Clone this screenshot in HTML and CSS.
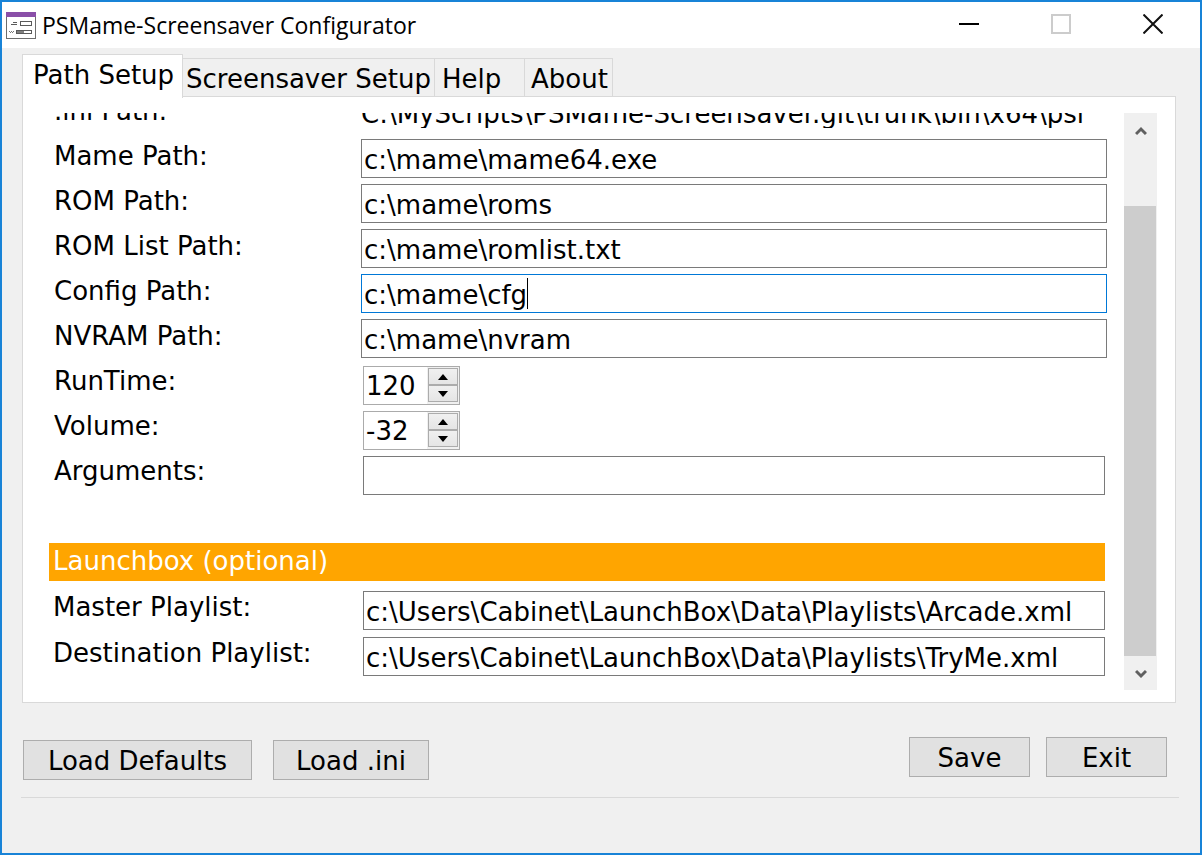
FILE: index.html
```html
<!DOCTYPE html>
<html lang="en">
<head>
<meta charset="utf-8">
<meta name="viewport" content="width=device-width, initial-scale=1">
<title>PSMame-Screensaver Configurator</title>
<link rel="stylesheet" href="styles.css">
</head>
<body>
<div class="window">
  <header class="titlebar">
    <svg class="app-icon" width="30" height="27" viewBox="0 0 30 27" shape-rendering="crispEdges" aria-hidden="true">
      <rect x="0.5" y="0.5" width="29" height="26" fill="#fff" stroke="#6d6d6d"/>
      <rect width="30" height="5" fill="#8a4fa8"/>
      <path d="M7 10.5h4M5 12.5h6" stroke="#5a5a5a"/>
      <rect x="14.5" y="9.5" width="11" height="4" fill="#fff" stroke="#5a5a5a"/>
      <path d="M3 19.5h1M4 20.5h1M5 19.5h1M6 20.5h1M7 19.5h1" fill="none" stroke="#777"/>
      <rect x="10.5" y="18.5" width="15" height="3" fill="#fff" stroke="#5a5a5a"/>
      <rect x="11" y="19" width="7" height="2" fill="#808080"/>
    </svg>
    <h1 class="title">PSMame-Screensaver Configurator</h1>
    <div class="window-controls">
      <button class="window-button" type="button" aria-label="Minimize">
        <svg width="20" height="20" viewBox="0 0 20 20" shape-rendering="crispEdges"><path d="M0 10h20" stroke="#000" stroke-width="2"/></svg>
      </button>
      <button class="window-button" type="button" aria-label="Maximize" disabled>
        <svg width="20" height="20" viewBox="0 0 20 20" shape-rendering="crispEdges"><rect x="1" y="1" width="18" height="18" fill="none" stroke="#ccc" stroke-width="2"/></svg>
      </button>
      <button class="window-button" type="button" aria-label="Close">
        <svg width="20" height="20" viewBox="0 0 20 20"><path d="M0.5 0.5l19 19M19.5 0.5l-19 19" stroke="#111" stroke-width="2"/></svg>
      </button>
    </div>
  </header>

  <main class="client">
    <div class="tabs" role="tablist">
      <button class="tab tab-active" type="button" role="tab" aria-selected="true">Path Setup</button>
      <button class="tab tab-saver" type="button" role="tab" aria-selected="false">Screensaver Setup</button>
      <button class="tab tab-help" type="button" role="tab" aria-selected="false">Help</button>
      <button class="tab tab-about" type="button" role="tab" aria-selected="false">About</button>
    </div>

    <section class="panel" role="tabpanel">
      <form class="form">
        <div class="row row-clipped"><span class="label">.ini Path:</span><span class="ini-path">C:\MyScripts\PSMame-Screensaver.git\trunk\bin\x64\psi</span></div>
        <div class="group">
          <div class="row"><label class="label" for="mame">Mame Path:</label><input class="field" id="mame" type="text" value="c:\mame\mame64.exe"></div>
          <div class="row"><label class="label" for="rom">ROM Path:</label><input class="field" id="rom" type="text" value="c:\mame\roms"></div>
          <div class="row"><label class="label" for="romlist">ROM List Path:</label><input class="field" id="romlist" type="text" value="c:\mame\romlist.txt"></div>
          <div class="row"><label class="label" for="config">Config Path:</label><div class="active-field"><input class="field field-active" id="config" type="text" value="c:\mame\cfg"><span class="caret"></span></div></div>
          <div class="row"><label class="label" for="nvram">NVRAM Path:</label><input class="field" id="nvram" type="text" value="c:\mame\nvram"></div>
        </div>
        <div class="group group-inset">
          <div class="row"><label class="label" for="runtime">RunTime:</label>
            <div class="spinner"><input class="spinner-input" id="runtime" type="number" value="120">
              <div class="spinner-buttons">
                <button class="step" type="button" aria-label="Increase run time"><svg width="10" height="6" viewBox="0 0 10 6"><path d="M5 0l5 6H0z"/></svg></button>
                <button class="step" type="button" aria-label="Decrease run time"><svg width="10" height="6" viewBox="0 0 10 6"><path d="M0 0h10L5 6z"/></svg></button>
              </div></div></div>
          <div class="row"><label class="label" for="volume">Volume:</label>
            <div class="spinner"><input class="spinner-input" id="volume" type="number" value="-32">
              <div class="spinner-buttons">
                <button class="step" type="button" aria-label="Increase volume"><svg width="10" height="6" viewBox="0 0 10 6"><path d="M5 0l5 6H0z"/></svg></button>
                <button class="step" type="button" aria-label="Decrease volume"><svg width="10" height="6" viewBox="0 0 10 6"><path d="M0 0h10L5 6z"/></svg></button>
              </div></div></div>
          <div class="row"><label class="label" for="arguments">Arguments:</label><input class="field" id="arguments" type="text" value=""></div>
        </div>
        <h2 class="section-title">Launchbox (optional)</h2>
        <div class="group group-inset group-launchbox">
          <div class="row"><label class="label" for="master">Master Playlist:</label><input class="field" id="master" type="text" value="c:\Users\Cabinet\LaunchBox\Data\Playlists\Arcade.xml"></div>
          <div class="row"><label class="label" for="destination">Destination Playlist:</label><input class="field" id="destination" type="text" value="c:\Users\Cabinet\LaunchBox\Data\Playlists\TryMe.xml"></div>
        </div>
      </form>
      <div class="scrollbar">
        <button class="scroll-arrow" type="button" aria-label="Scroll up"><svg width="12" height="10" viewBox="0 0 12 10"><path d="M1 8l5-5 5 5" fill="none" stroke="#606060" stroke-width="3"/></svg></button>
        <div class="scroll-track"><div class="scroll-thumb"></div></div>
        <button class="scroll-arrow" type="button" aria-label="Scroll down"><svg width="12" height="10" viewBox="0 0 12 10"><path d="M1 2l5 5 5-5" fill="none" stroke="#606060" stroke-width="3"/></svg></button>
      </div>
    </section>

    <footer class="actions">
      <div class="actions-load">
        <button class="button button-defaults" type="button">Load Defaults</button>
        <button class="button button-ini" type="button">Load .ini</button>
      </div>
      <div class="actions-end">
        <button class="button button-end" type="button">Save</button>
        <button class="button button-end" type="button">Exit</button>
      </div>
    </footer>
  </main>
</div>
</body>
</html>
```
FILE: styles.css
```css
*, *::before, *::after { box-sizing: border-box; }

body { margin: 0; }

body, button, input {
  font-family: Verdana, "DejaVu Sans", sans-serif;
  font-size: 26px;
  color: #000;
}

button { margin: 0; padding: 0; border: 0; background: none; }

svg { display: block; }

.window {
  display: flex;
  flex-direction: column;
  min-height: 100vh;
  border: 2px solid #1883d7;
  background: #f0f0f0;
}

.titlebar {
  display: flex;
  align-items: center;
  height: 46px;
  padding: 0 37px 0 4px;
  background: #fff;
}

.title {
  flex: 1;
  margin: 0 0 0 6px;
  font: 400 23px/32px "Segoe UI", "Open Sans", sans-serif;
  white-space: nowrap;
}

.window-controls { display: flex; gap: 72px; padding-bottom: 2px; }
.window-button { width: 20px; height: 20px; }

.client { padding: 6px 21px 0 19px; }

.tabs {
  display: flex;
  align-items: flex-end;
  padding-left: 1px;
}

.tab {
  height: 39px;
  margin-left: -1px;
  padding: 2px 0 0 7px;
  border: 1px solid #d9d9d9;
  line-height: 34px;
  text-align: left;
  white-space: nowrap;
}

.tab-active {
  z-index: 1;
  width: 161px;
  height: 44px;
  margin: 0 0 -1px;
  padding: 0 0 4px 10px;
  border-bottom: 0;
  background: #fff;
}

.tab-saver { width: 253px; padding-left: 3px; }
.tab-help { width: 91px; }
.tab-about { width: 89px; padding-left: 6px; }

.panel {
  display: flex;
  gap: 17px;
  margin: -1px 3px 0 1px;
  padding: 16px 18px 12px 26px;
  border: 1px solid #d9d9d9;
  background: #fff;
}

.form { flex: 1; min-width: 0; }

.row { display: flex; align-items: flex-start; }

.row-clipped {
  align-items: flex-end;
  height: 15px;
  margin-bottom: 11px;
  overflow: hidden;
}

.label {
  flex: none;
  width: 312px;
  padding-left: 5px;
  line-height: 34px;
  white-space: nowrap;
}

.ini-path {
  flex: 1;
  line-height: 28px;
  white-space: nowrap;
  overflow: hidden;
}

.group { display: flex; flex-direction: column; gap: 6px; }

.group-inset { margin-top: 8px; padding-right: 2px; }
.group-inset .label { width: 314px; line-height: 30px; }

.field {
  flex: 1;
  width: 100%;
  min-width: 0;
  height: 39px;
  padding: 2px 2px 0;
  border: 1px solid #7a7a7a;
  border-radius: 0;
  background: #fff;
  outline: 0;
}

.active-field { position: relative; display: flex; flex: 1; }
.field-active { border-color: #0078d7; }

.caret {
  position: absolute;
  top: 4px;
  left: 166px;
  width: 1px;
  height: 31px;
  background: #000;
}

.spinner {
  display: flex;
  width: 97px;
  height: 39px;
  border: 1px solid #ababab;
  background: #fff;
}

.spinner-input {
  flex: 1;
  min-width: 0;
  padding: 1px 0 0 2px;
  border: 0;
  outline: 0;
  appearance: textfield;
}

.spinner-input::-webkit-inner-spin-button { appearance: none; margin: 0; }

.spinner-buttons {
  display: flex;
  flex-direction: column;
  width: 32px;
  padding: 1px 1px 2px;
  background: #f0f0f0;
}

.step {
  display: grid;
  place-items: center;
  flex: 1;
  border: 1px solid #acacac;
  background: linear-gradient(#f0f0f0, #e5e5e5);
}

.section-title {
  height: 38px;
  margin: 48px 2px 0 0;
  padding-left: 4px;
  background: #ffa500;
  color: #fff;
  font-size: 26px;
  font-weight: 400;
  line-height: 36px;
}

.group-launchbox { gap: 7px; margin-top: 10px; }
.group-launchbox .label { padding-left: 4px; line-height: 32px; }

.scrollbar {
  display: flex;
  flex-direction: column;
  width: 33px;
  height: 577px;
  background: #f0f0f0;
}

.scroll-arrow { display: grid; place-items: center; height: 34px; padding-top: 2px; }
.scroll-track { display: flex; flex: 1; align-items: flex-end; }
.scroll-thumb { width: 32px; height: 450px; background: #cdcdcd; }

.actions {
  display: flex;
  justify-content: space-between;
  padding: 34px 12px 17px 2px;
  border-bottom: 1px solid #d9d9d9;
}

.actions-load { display: flex; gap: 21px; padding-top: 3px; }
.actions-end { display: flex; gap: 16px; }

.button {
  height: 40px;
  padding-top: 2px;
  border: 1px solid #adadad;
  background: #e1e1e1;
  white-space: nowrap;
}

.button-defaults { width: 229px; }
.button-ini { width: 156px; }
.button-end { width: 121px; }
```
